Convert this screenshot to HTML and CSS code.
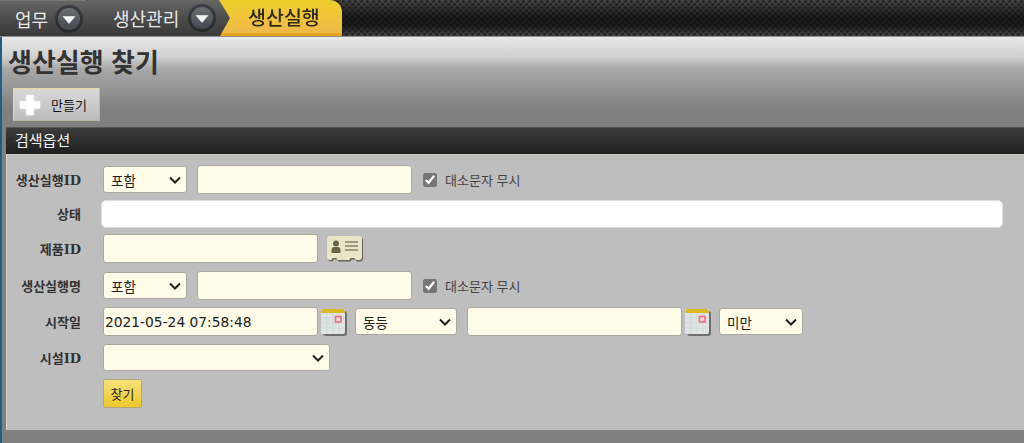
FILE: index.html
```html
<!DOCTYPE html>
<html lang="ko">
<head>
<meta charset="UTF-8">
<title>생산실행 찾기</title>
<link rel="stylesheet" href="styles.css">
</head>
<body>

<!-- Breadcrumb -->
<div class="topbar">
    <div class="crumbs">
        <div class="crumb crumb-first">
            <span>업무</span>
            <svg class="drop" viewBox="0 0 28 28"><use href="#drop-icon"/></svg>
        </div>
        <div class="crumb crumb-second">
            <span>생산관리</span>
            <svg class="drop" viewBox="0 0 28 28"><use href="#drop-icon"/></svg>
        </div>
        <div class="crumb-current">생산실행</div>
    </div>
</div>

<div class="page">
    <h1>생산실행 찾기</h1>
    <div class="toolbar">
        <a class="btn-create">
            <svg class="plus" viewBox="0 0 24 24">
                <path d="M9 2h6v7h7v6h-7v7H9v-7H2V9h7z" fill="#fff" stroke="#fff" stroke-width="2" stroke-linejoin="round"/>
            </svg>
            만들기
        </a>
    </div>

    <div class="section-head">검색옵션</div>
    <form class="search">
        <div class="row row-1">
            <label>생산실행ID</label>
            <select class="op"><option>포함</option></select>
            <input type="text" class="text">
            <input type="checkbox" class="check" checked>
            <span class="hint">대소문자 무시</span>
        </div>
        <div class="row row-2">
            <label>상태</label>
            <input type="text" class="status">
        </div>
        <div class="row row-3">
            <label>제품ID</label>
            <input type="text" class="text">
            <svg class="card-icon" viewBox="0 0 38 28">
                <path d="M4 1h29q3 0 3 3v18q0 3-3 3h-3q-1 0-1.500-2h-4q-.5 2-1.500 2H12q-1 0-1.500-2h-4Q6 25 5 25H4q-3 0-3-3V4q0-3 3-3z" fill="#4a4a3e" transform="translate(1 1.500)" opacity=".75"/>
                <path d="M4 1h29q3 0 3 3v18q0 3-3 3h-3q-1 0-1.500-2h-4q-.5 2-1.500 2H12q-1 0-1.500-2h-4Q6 25 5 25H4q-3 0-3-3V4q0-3 3-3z" fill="#e9e6c8"/>
                <circle cx="10" cy="8.500" r="3" fill="#6d6446"/>
                <path d="M5.500 18v-3q0-3 3-3h3q3 0 3 3v3z" fill="#6d6446"/>
                <path d="M19 7h13M19 11h13M19 15h13" stroke="#85806a" stroke-width="1.500"/>
            </svg>
        </div>
        <div class="row row-4">
            <label>생산실행명</label>
            <select class="op"><option>포함</option></select>
            <input type="text" class="text">
            <input type="checkbox" class="check" checked>
            <span class="hint">대소문자 무시</span>
        </div>
        <div class="row row-5">
            <label>시작일</label>
            <input type="text" class="text date" value="2021-05-24 07:58:48">
            <svg class="cal" viewBox="0 0 26 28"><use href="#cal-icon"/></svg>
            <select class="op-date"><option>동등</option></select>
            <input type="text" class="text">
            <svg class="cal" viewBox="0 0 26 28"><use href="#cal-icon"/></svg>
            <select class="op-less"><option>미만</option></select>
        </div>
        <div class="row row-6">
            <label>시설ID</label>
            <select class="facility"><option></option></select>
        </div>
        <div class="row row-7">
            <label></label>
            <button type="button" class="btn-find">찾기</button>
        </div>
    </form>
</div>

<!-- shared icons -->
<svg class="defs" aria-hidden="true">
    <defs>
        <linearGradient id="drop-face" x1="0" y1="0" x2="0" y2="1">
            <stop offset="0" stop-color="#6c7076"/>
            <stop offset="1" stop-color="#44474d"/>
        </linearGradient>
        <linearGradient id="drop-ring" x1="0" y1="0" x2="0" y2="1">
            <stop offset="0" stop-color="#3a3d42"/>
            <stop offset="1" stop-color="#26282c"/>
        </linearGradient>
        <g id="drop-icon">
            <circle cx="14" cy="14" r="14" fill="url(#drop-ring)"/>
            <circle cx="14" cy="14" r="11" fill="url(#drop-face)"/>
            <path d="M8 11.500h12l-6 7z" fill="#f4f4f4" stroke="#f4f4f4" stroke-width=".6" stroke-linejoin="round"/>
        </g>
        <g id="cal-icon">
            <rect x="2" y="3" width="24" height="25" rx="3" fill="#6f6f6f"/>
            <rect x="0" y="1" width="24" height="25" rx="2" fill="#dfe4e4"/>
            <path d="M0 5q0-4 3-4h18q3 0 3 4z" fill="#d9b71e"/>
            <path d="M0 10h24M0 15h24M0 20h24M6 5v21M12 5v21M18 5v21" stroke="#cdd3d3" stroke-width=".7"/>
            <rect x="14.500" y="8.500" width="5.500" height="5.500" fill="#f7d9dc" stroke="#f26d7d" stroke-width="1.600"/>
        </g>
    </defs>
</svg>

</body>
</html>
```

FILE: styles.css
```css
:root {
    --field-bg: #fffce9;
    --field-border: #a9a9a0;
    --kr-font: "Noto Sans CJK KR", sans-serif;
    --chevron: url("data:image/svg+xml,%3Csvg xmlns='http://www.w3.org/2000/svg' width='12' height='8'%3E%3Cpath d='M1 1.500l5 5 5-5' fill='none' stroke='%23222' stroke-width='2'/%3E%3C/svg%3E");
}
html, body {
    height: 100%;
}
body {
    margin: 0;
    background: #808080;
    font-family: var(--kr-font);
    overflow: hidden;
}

/* breadcrumb */
.topbar {
    height: 36px;
    border-bottom: 1px solid #8f8f8f;
    background-color: #222;
    background-image:
        radial-gradient(circle at 1.500px 1.500px, rgba(0,0,0,.4) 1px, transparent 2px),
        radial-gradient(circle at 4.500px 4.500px, rgba(0,0,0,.4) 1px, transparent 2px),
        linear-gradient(#444, #1a1a1a 50%, #1c1c1c 70%, #444);
    background-size: 6px 6px, 6px 6px, 100% 100%;
}
.crumbs {
    display: flex;
    height: 36px;
    filter: drop-shadow(1px 0 0 #1d1d1d);
}
.crumb {
    display: flex;
    align-items: center;
    height: 36px;
    color: #e9e9e9;
    font-size: 18px;
    background: linear-gradient(#666, #4c4c4c 50%, #393939);
    clip-path: polygon(0 0, calc(100% - 11px) 0, 100% 50%, calc(100% - 10px) 100%, 0 100%);
}
.crumb span {
    margin-right: 9px;
}
.crumb-first {
    width: 97px;
    padding-left: 15px;
    box-sizing: border-box;
    position: relative;
    z-index: 3;
    border-top: 1px solid #777;
}
.crumb-first span {
    margin-right: 7px;
}
.crumb-second {
    width: 143px;
    margin-left: -10px;
    padding-left: 26px;
    box-sizing: border-box;
    position: relative;
    z-index: 2;
}
.drop {
    width: 28px;
    height: 28px;
    flex: none;
}
.crumb-current {
    width: 132px;
    height: 36px;
    margin-left: -20px;
    padding-left: 38px;
    box-sizing: border-box;
    line-height: 33px;
    color: #2c2a16;
    font-size: 19.500px;
    font-weight: 500;
    border-radius: 0 12px 0 0;
    border-bottom: 3px solid #e9a21e;
    background: linear-gradient(#eecf2e, #f1c23a 60%, #edb94e);
}

/* page */
.page {
    height: 406px;
    border-left: 2px solid #1f5f85;
    background: linear-gradient(#e9e9e9 0, #d0d0d0 20px, #a8a8a8 32px, #808080 72px);
    overflow: hidden;
}
h1 {
    margin: 6px 0 0 6px;
    height: 36px;
    color: #333;
    font-size: 26px;
    font-weight: 700;
    line-height: 36px;
}
.toolbar {
    margin: 9px 0 0 11px;
}
.btn-create {
    display: flex;
    align-items: center;
    width: 87px;
    height: 33px;
    box-sizing: border-box;
    color: #111;
    font-size: 13px;
    border: 1px solid #b9b7a6;
    border-top-color: #e6dc9c;
    border-left-color: #e6dc9c;
    background: linear-gradient(#d9d9d9, #bcbcbc);
}
.plus {
    width: 22px;
    height: 22px;
    margin: 0 10px 0 5px;
    filter: drop-shadow(0 0 1px #eee);
}
.section-head {
    margin: 6px 0 0 4px;
    height: 28px;
    padding-left: 9px;
    box-sizing: border-box;
    color: #f2f2f2;
    font-size: 15px;
    line-height: 24px;
    border-top: 1px solid #555;
    border-bottom: 1px solid #c9c9bb;
    background: linear-gradient(#3d3d3d, #1e1e1e);
}

/* search form */
.search {
    margin-left: 4px;
    height: 275px;
    padding-top: 10px;
    box-sizing: border-box;
    background: #bebebe;
    border-left: 1px solid #d4d4d4;
}
.row {
    display: flex;
    align-items: center;
    height: 29px;
}
.row-2 { margin-top: 5px; }
.row-3 { margin-top: 6px; }
.row-4 { margin-top: 8px; }
.row-5 { margin-top: 7px; }
.row-6 { margin-top: 7px; }
.row-7 { margin-top: 7px; }
label {
    width: 74px;
    flex: none;
    margin-right: 22px;
    text-align: right;
    color: #333;
    font: 700 13px "DejaVu Serif", var(--kr-font);
}
input.text, .status {
    height: 29px;
    padding: 0 1px;
    box-sizing: border-box;
    color: #222;
    font: 13.800px "DejaVu Sans", var(--kr-font);
    background: var(--field-bg);
    border: 1px solid var(--field-border);
    border-radius: 3px;
}
input.text {
    width: 215px;
}
.status {
    width: 902px;
    height: 28px;
    margin-left: -2px;
    background: #fff;
    border-color: #ddd;
    border-radius: 5px;
}
select {
    appearance: none;
    height: 27px;
    padding-left: 7px;
    box-sizing: border-box;
    color: #222;
    font: 13.500px var(--kr-font);
    background: var(--field-bg) var(--chevron) no-repeat right 5px center;
    border: 1px solid var(--field-border);
    border-radius: 3px;
}
.op {
    width: 84px;
    margin-right: 10px;
}
.op-date {
    width: 102px;
    margin: 0 10px 0 8px;
}
.op-less {
    width: 84px;
    margin-left: 8px;
}
.facility {
    width: 227px;
}
.check {
    width: 14px;
    height: 14px;
    margin: 0 8px 0 11px;
    accent-color: #767676;
}
.hint {
    color: #444;
    font-size: 13px;
}
.card-icon {
    width: 38px;
    height: 28px;
    margin-left: 8px;
}
.cal {
    width: 26px;
    height: 28px;
    margin-left: 3px;
}
.btn-find {
    width: 39px;
    height: 29px;
    padding: 0;
    color: #2c2a16;
    font: 13px var(--kr-font);
    border: 1px solid #b0a878;
    border-radius: 2px;
    background: linear-gradient(#f5e27a, #eec62c);
}
.defs {
    position: absolute;
    width: 0;
    height: 0;
}
```
